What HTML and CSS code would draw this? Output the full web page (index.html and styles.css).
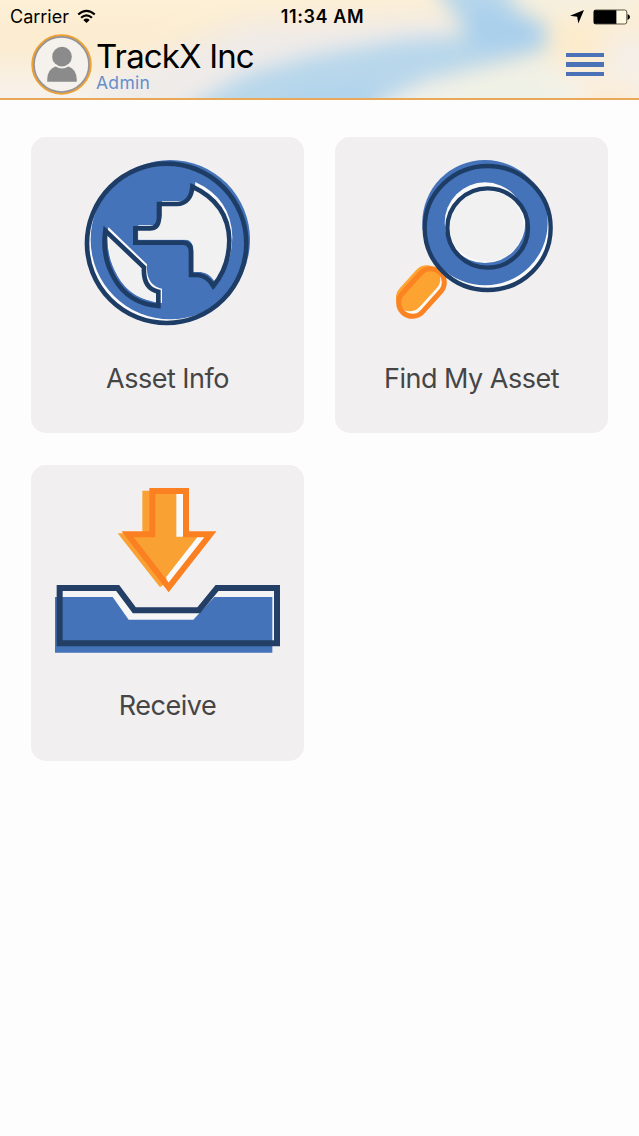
FILE: index.html
```html
<!DOCTYPE html>
<html lang="en">
<head>
<meta charset="utf-8">
<title>TrackX Inc</title>
<link rel="stylesheet" href="styles.css">
</head>
<body>
<header class="header">
  <svg class="header-art" viewBox="0 0 639 98" preserveAspectRatio="none" aria-hidden="true">
    <defs>
      <linearGradient id="base" x1="0" y1="0" x2="0" y2="1"><stop offset="0" stop-color="#fdf0d6"/><stop offset=".45" stop-color="#fcecd0"/><stop offset="1" stop-color="#f6f2ec"/></linearGradient>
      <filter id="soft" x="-30%" y="-60%" width="160%" height="220%"><feGaussianBlur stdDeviation="14"/></filter>
      <filter id="mid" x="-30%" y="-60%" width="160%" height="220%"><feGaussianBlur stdDeviation="10"/></filter>
    </defs>
    <rect width="639" height="98" fill="url(#base)"/>
    <g filter="url(#soft)">
      <path d="M110 75L250 22L460 15L450 70L300 120H90Z" fill="#efebe9"/>
      <path d="M410 85L550 55L580 120H390Z" fill="#f0f1e6"/>
      <path d="M605 35H670V80H610Z" fill="#f4efea"/>
      <path d="M490 -20H640V8H500Z" fill="#f2efe4"/>
      <path d="M555 30H600V60H555Z" fill="#fdebc9"/>
    </g>
    <g filter="url(#mid)">
      <path d="M150 130L245 74L310 56L400 40L465 35L450 10L425 -25H500L518 10L548 24L546 50L510 61L425 80L385 100L360 130Z" fill="#b8d7eb"/>
      <path d="M470 2L540 26L540 46L470 48Z" fill="#a9cfec"/>
      <path d="M260 130L290 92L380 82L350 130Z" fill="#b0d3ec"/>
      <path d="M590 85L639 90V120H570Z" fill="#fdead2"/>
    </g>
  </svg>
  <div class="status">
    <div class="status-left"><span class="carrier">Carrier</span>
      <svg class="wifi" viewBox="0 0 20 16"><g fill="none" stroke="#000" stroke-width="2.3"><path d="M1.2 5.9Q10-2.1 18.8 5.9"/><path d="M4.2 9.4Q10 4.1 15.8 9.4"/></g><path d="M6.6 11.6Q10 8.7 13.4 11.6L10 15Z"/></svg>
    </div>
    <span class="time">11:34 AM</span>
    <div class="status-right">
      <svg class="location" viewBox="0 0 14 14"><path d="M14 0L8.3 13.6L7.2 6.8L0 5.8Z"/></svg>
      <svg class="battery" viewBox="0 0 38 16"><rect x=".7" y=".8" width="34" height="14.4" rx="2.2" fill="#fff8e3" stroke="#55513f"/><path d="M1 1H24V15H1Z"/><path d="M35.5 5Q38 6 38 8T35.5 11Z"/></svg>
    </div>
  </div>
  <div class="bar">
    <svg class="avatar" viewBox="0 0 62 62"><circle cx="31" cy="31" r="29.6" fill="#f5f1ec" stroke="#f0a030" stroke-width="2.2"/><circle cx="31" cy="31" r="28" fill="none" stroke="#969396" stroke-width="1.8"/><circle cx="31.5" cy="23" r="10" fill="#8b8b8b"/><path d="M16.500 48.500V46Q17 35.500 25 33Q31.500 37 38 33Q46 35.500 46.500 46V48.500Z" fill="#8b8b8b"/></svg>
    <div class="identity"><h1 class="company">TrackX Inc</h1><span class="role">Admin</span></div>
    <div class="menu"><i class="menu-line"></i><i class="menu-line"></i><i class="menu-line"></i></div>
  </div>
</header>
<main class="grid">
  <section class="card">
    <svg class="icon" viewBox="0 0 555 555">
      <circle cx="275" cy="279" r="240" fill="#fafafa"/>
      <circle cx="286" cy="269" r="239" fill="#4473b9"/>
      <g fill="#fafafa" transform="translate(9 -9)">
        <path d="M352 105C352 140 335 162 305 162H252V205Q250 235 225 235H181V278H325Q348 280 348 305V375H370Q398 378 415 408Q463 350 463 270Q460 155 352 105Z"/>
        <path d="M91 240L207 352Q203 415 252 425V468Q160 460 118 385Q80 320 91 240Z"/>
      </g>
      <g fill="#f2f1f1" transform="translate(5 -5)">
        <path d="M352 120C350 145 335 166 305 166H256V205Q254 239 225 239H185V273H325Q350 276 350 305V370H370Q398 373 413 398Q456 350 456 270Q453 170 352 120Z"/>
        <path d="M98 255L200 354Q198 418 245 430V458Q165 455 124 385Q92 325 98 255Z"/>
      </g>
      <g fill="none" stroke="#1e3d66" stroke-width="14">
        <circle cx="275" cy="280" r="239"/>
        <path d="M352 110C350 140 335 162 305 162H252V205Q250 235 225 235H181V278H325Q348 280 348 305V375H370Q398 378 415 408Q463 350 463 270Q460 160 352 110Z"/>
        <path d="M91 242L207 352Q203 415 250 425V468Q160 460 118 385Q80 320 91 242Z"/>
      </g>
    </svg>
    <h2 class="label">Asset Info</h2>
  </section>
  <section class="card">
    <svg class="icon" viewBox="-18 0 555 555">
      <g transform="translate(82 458) rotate(-48)"><rect x="-41" y="-41" width="164" height="82" rx="41" fill="#fcfaf5"/></g>
      <g transform="translate(74 443) rotate(-48)"><rect x="-41" y="-41" width="158" height="82" rx="41" fill="#fca331"/></g>
      <g transform="translate(82 458) rotate(-48)"><rect x="-41" y="-41" width="164" height="82" rx="41" fill="none" stroke="#fb8322" stroke-width="15"/></g>
      <ellipse cx="308" cy="234" rx="189" ry="186" fill="#fafafa"/>
      <circle cx="300" cy="218" r="188" fill="#4473b9"/>
      <circle cx="300" cy="218" r="121" fill="#fafafa"/>
      <ellipse cx="304" cy="228" rx="112" ry="106" fill="#f2f1f1"/>
      <g fill="none" stroke="#1e3d66" stroke-width="13"><ellipse cx="308" cy="234" rx="189" ry="186"/><ellipse cx="308" cy="234" rx="121" ry="119"/></g>
    </svg>
    <h2 class="label">Find My Asset</h2>
  </section>
  <section class="card">
    <svg class="icon icon-wide" viewBox="0 -6 735 555">
      <path d="M322 33H423V163H496L371 323L248 163H322Z" fill="#fafafa"/>
      <path d="M292 32H394V170H458L364 290V308L345 322L218 160H292Z" fill="#faa133"/>
      <path d="M322 33H423V163H496L371 322L248 163H322Z" fill="none" stroke="#fb8022" stroke-width="18"/>
      <path d="M44 324H218L268 391H461L516 324H696V490H44Z" fill="#f4f4f5"/>
      <path d="M203 351L251 419H445L508 351L461 391H268L218 324Z" fill="#f6f6f6"/>
      <path d="M30 351H203L251 419H445L508 351H682V518H30Z" fill="#4473b9"/>
      <path d="M44 324H218L268 391H461L516 324H696V490H44Z" fill="none" stroke="#233f66" stroke-width="18"/>
    </svg>
    <h2 class="label label-receive">Receive</h2>
  </section>
</main>
</body>
</html>
```
FILE: styles.css
```css
* { box-sizing: border-box; }
body { margin: 0; min-height: 1136px; background: #fdfdfd; color: #000; font-family: Inter, "Liberation Sans", sans-serif; }
svg { display: block; flex: none; }
.header { position: relative; height: 100px; border-bottom: 2px solid #e9a858; overflow: hidden; }
.header-art { position: absolute; inset: 0; width: 100%; height: 100%; z-index: -1; }
.status { display: grid; grid-template-columns: 1fr auto 1fr; align-items: center; height: 34px; padding: 0 9px 1px 10px; font-size: 18px; line-height: 22px; }
.status-left { display: flex; align-items: center; gap: 8px; }
.wifi { width: 19px; height: 15px; }
.time { padding-left: 5px; font-weight: 600; letter-spacing: .6px; }
.status-right { display: flex; align-items: center; justify-content: flex-end; gap: 9px; }
.location { width: 14px; height: 14px; }
.battery { width: 37px; height: 16px; }
.bar { display: flex; height: 64px; padding: 0 35px 0 31px; }
.avatar { width: 61px; height: 61px; }
.identity { flex: 1; padding: 4px 0 0 4px; }
.company { margin: 0; font-size: 33px; line-height: 36px; font-weight: 400; letter-spacing: -.85px; white-space: nowrap; }
.role { display: block; font-size: 17.5px; line-height: 18px; color: #668ecb; letter-spacing: .3px; }
.menu { display: flex; flex-direction: column; gap: 5px; width: 38px; padding-top: 19px; }
.menu-line { height: 4.4px; background: #4b72b7; }
.grid { display: grid; grid-template-columns: 273px 273px; grid-auto-rows: 296px; gap: 32px 31px; padding: 37px 31px; }
.card { display: flex; flex-direction: column; align-items: center; padding-top: 13px; border-radius: 15px; background: #f1eff0; }
.icon { width: 185px; height: 185px; }
.icon-wide { width: 245px; }
.label { margin: 26px 0 0; font-size: 27px; line-height: 36px; font-weight: 400; letter-spacing: -.5px; color: #464546; }
.label-receive { margin-top: 25px; }
```
